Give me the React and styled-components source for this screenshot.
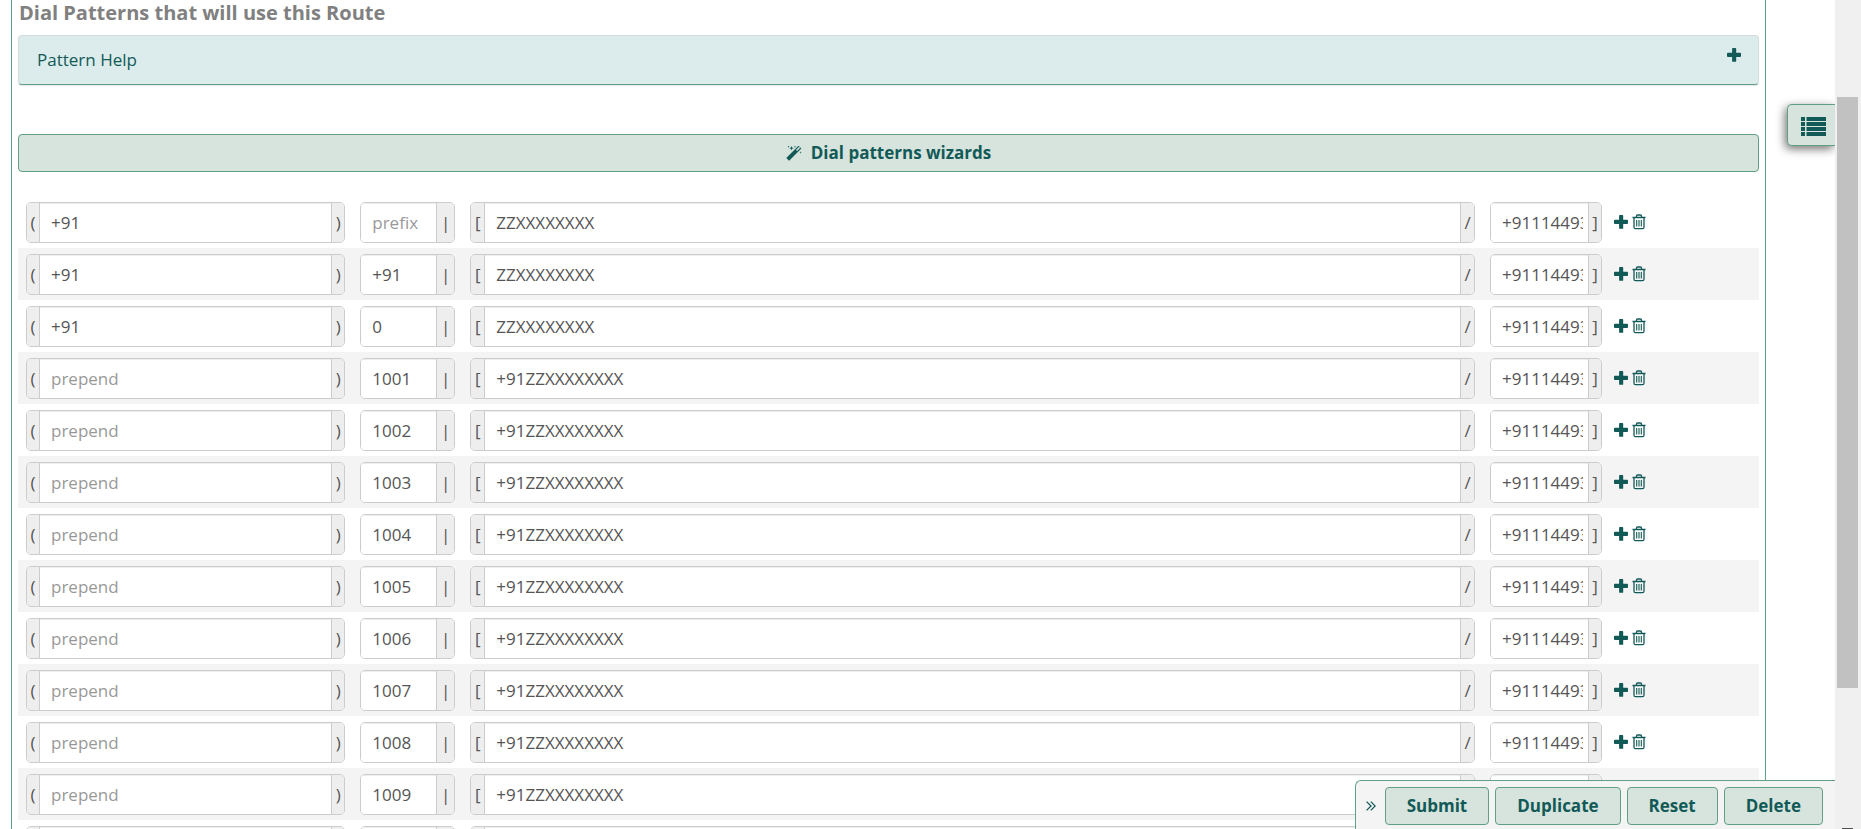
import React, { useState } from "react";
import styled, { createGlobalStyle } from "styled-components";

const GlobalStyle = createGlobalStyle`
  *, *::before, *::after { box-sizing: border-box; }
  body {
    margin: 0;
    background: #fff;
    color: #555;
    font-family: "Open Sans", "Noto Sans", sans-serif;
    font-size: 17px;
    line-height: 24px;
  }
  button, input { font: inherit; }
`;

const Shell = styled.div`
  display: flex;
  height: 100vh;
  overflow: hidden;
`;

const Page = styled.main`
  flex: 1;
  min-width: 0;
  padding: 0 69px 0 11px;
`;

const Panel = styled.section`
  padding: 0 6px;
  border: solid #62a085;
  border-width: 0 1px;
`;

const Title = styled.h3`
  margin: 0;
  padding-left: 1px;
  color: #808080;
  font-size: 20px;
  font-weight: 700;
  line-height: 26px;
`;

const HelpToggle = styled.button`
  display: flex;
  justify-content: space-between;
  width: 100%;
  height: 50px;
  margin-top: 9px;
  padding: 12px 17px 12px 18px;
  border: 1px solid #d5dddc;
  border-bottom-color: #62a085;
  border-radius: 4px;
  background: #dcecec;
  box-shadow: 0 1px 1px rgba(0, 0, 0, 0.1);
  color: #125a57;
  line-height: 24px;
  text-align: left;
  cursor: pointer;
`;

const Action = styled.button`
  display: flex;
  align-items: center;
  justify-content: center;
  gap: 9px;
  height: 38px;
  padding: 0 21px;
  border: 1px solid #62a085;
  border-radius: 4px;
  background: #d7e4dd;
  color: #125a57;
  font-weight: 700;
  cursor: pointer;
`;

const WizardButton = styled(Action)`
  width: 100%;
  margin: 49px 0 24px;
`;

const PatternTable = styled.table`
  width: 100%;
  border-collapse: collapse;
  table-layout: fixed;
`;

const Column = styled.col`
  width: ${(p) => p.$width};
`;

const Row = styled.tr`
  &:nth-child(even) { background: #f4f4f4; }
`;

const Cell = styled.td`
  padding: 6px 7px 5px 8px;
`;

const ActionCell = styled.td`
  padding: 0 5px;
`;

const Group = styled.div`
  display: flex;
  height: 41px;
  overflow: hidden;
  border: 1px solid #ccc;
  border-radius: 5px;
`;

const Addon = styled.span`
  display: flex;
  flex: none;
  align-items: center;
  justify-content: center;
  width: ${(p) => p.$width}px;
  border: solid #ccc;
  border-width: ${(p) => (p.$end ? "0 0 0 1px" : "0 1px 0 0")};
  background: #eee;
`;

const Field = styled.input`
  flex: 1;
  width: 0;
  min-width: 0;
  padding: 0 5px 0 11px;
  border: 0;
  outline: 0;
  background: #fff;
  box-shadow: inset 0 1px 1px rgba(0, 0, 0, 0.075);
  color: #555;

  &::placeholder { color: #999; opacity: 1; }
`;

const RowActions = styled.div`
  display: flex;
  align-items: center;
  gap: 4px;
`;

const IconButton = styled.button`
  display: flex;
  padding: 0;
  border: 0;
  background: none;
  color: #125a57;
  cursor: pointer;
`;

const SideTab = styled.button`
  position: fixed;
  top: 104px;
  right: 26px;
  display: flex;
  align-items: center;
  width: 48px;
  height: 42px;
  padding: 2px 0 0 13px;
  border: 1px solid #62a085;
  border-right: 0;
  border-radius: 5px 0 0 5px;
  background: #d7e4dd;
  box-shadow: -2px 3px 10px rgba(0, 0, 0, 0.55);
  clip-path: inset(-20px 0 -20px -20px);
  color: #125a57;
  cursor: pointer;
`;

const ActionBar = styled.div`
  position: fixed;
  right: 26px;
  bottom: 0;
  display: flex;
  gap: 6px;
  height: 49px;
  padding: 6px 12px 4px 8px;
  border: solid #62a085;
  border-width: 1px 0 0 1px;
  border-radius: 6px 0 0 0;
  background: #f4f4f4;
`;

const Collapse = styled(IconButton)`
  align-items: center;
  justify-content: center;
  width: 15px;
`;

const Track = styled.div`
  display: flex;
  flex: none;
  flex-direction: column;
  justify-content: space-between;
  width: 26px;
  padding: 97px 3px 0 2px;
  background: #f0f0f0;
`;

const Thumb = styled.div`
  height: 80.7%;
  background: #c1c1c1;
`;

const TrackEnd = styled.div`
  align-self: center;
  width: 11px;
  height: 1px;
  background: #505050;
`;

const PlusIcon = () => (
  <svg width="14" height="14" viewBox="0 0 14 14" fill="currentColor" aria-hidden="true">
    <path d="M6 0h2.400q.8 0 .8.8v4h4q.8 0 .8.8V8q0 .9-.8.9h-4v4q0 .9-.8.9H6q-.9 0-.9-.9v-4H.9Q0 8.900 0 8V5.600q0-.8.9-.8h4.200v-4Q5.100 0 6 0z" />
  </svg>
);

const TrashIcon = () => (
  <svg width="14" height="16" viewBox="0 0 14 16" fill="none" stroke="currentColor" strokeWidth="1.300" aria-hidden="true">
    <path d="M.5 3.500h13M4.500 3.200V2q0-1 1-1h3q1 0 1 1v1.200M2 3.500v9.700q0 1.500 1.500 1.500h7q1.500 0 1.500-1.500V3.500" />
    <path d="M4.700 6v6.500M7 6v6.500M9.300 6v6.500" strokeWidth="1.100" />
  </svg>
);

const WandIcon = () => (
  <svg width="16" height="16" viewBox="0 0 16 16" aria-hidden="true">
    <path d="M1.700 14.300 13.900 2.100" stroke="currentColor" strokeWidth="4" />
    <path d="m10.500 5.500 3.100-3.100" stroke="#d7e4dd" strokeWidth="1.500" />
    <path fill="currentColor" d="M2.500.5l.3.900.9.300-.9.300-.3.900-.3-.9-.9-.3.900-.3zM5.500 1l.6 1.600 1.600.6-1.600.6-.6 1.600-.6-1.600-1.600-.6 1.600-.6zM9 .5l.3.900.9.300-.9.300-.3.900-.3-.9-.9-.3.900-.3zM14.600 6.300l.3.900.9.300-.9.300-.3.900-.3-.9-.9-.3.900-.3z" />
  </svg>
);

const ListIcon = () => (
  <svg width="25" height="19" viewBox="0 0 25 19" fill="currentColor" aria-hidden="true">
    {[0, 5, 10, 15].map((y) => (
      <path key={y} d={`M0 ${y}h4v4H0zM5.500 ${y}H25v4H5.500z`} />
    ))}
  </svg>
);

const ChevronsIcon = () => (
  <svg width="10" height="10" viewBox="0 0 10 10" fill="none" stroke="currentColor" strokeWidth="1.300" aria-hidden="true">
    <path d="M.6.6 5 5 .6 9.400M4.800.6 9.200 5 4.800 9.400" />
  </svg>
);

const callerId = "+91114493";

const initialPatterns = [
  { prepend: "+91", prefix: "", match: "ZZXXXXXXXX", callerId },
  { prepend: "+91", prefix: "+91", match: "ZZXXXXXXXX", callerId },
  { prepend: "+91", prefix: "0", match: "ZZXXXXXXXX", callerId },
  ...Array.from({ length: 10 }, (_, i) => ({
    prepend: "",
    prefix: String(1001 + i),
    match: "+91ZZXXXXXXXX",
    callerId,
  })),
].map((pattern, id) => ({ ...pattern, id }));

function PatternRow({ pattern, onAdd, onRemove }) {
  return (
    <Row>
      <Cell>
        <Group>
          <Addon $width={13}>(</Addon>
          <Field aria-label="Prepend" placeholder="prepend" defaultValue={pattern.prepend} />
          <Addon $width={13} $end>)</Addon>
        </Group>
      </Cell>
      <Cell>
        <Group>
          <Field aria-label="Prefix" placeholder="prefix" defaultValue={pattern.prefix} />
          <Addon $width={18} $end>|</Addon>
        </Group>
      </Cell>
      <Cell>
        <Group>
          <Addon $width={14}>[</Addon>
          <Field aria-label="Match pattern" placeholder="match pattern" defaultValue={pattern.match} />
          <Addon $width={14} $end>/</Addon>
        </Group>
      </Cell>
      <Cell>
        <Group>
          <Field aria-label="Caller ID" placeholder="CallerID" defaultValue={pattern.callerId} />
          <Addon $width={13} $end>]</Addon>
        </Group>
      </Cell>
      <ActionCell>
        <RowActions>
          <IconButton type="button" aria-label="Add pattern" onClick={onAdd}><PlusIcon /></IconButton>
          <IconButton type="button" aria-label="Delete pattern" onClick={onRemove}><TrashIcon /></IconButton>
        </RowActions>
      </ActionCell>
    </Row>
  );
}

export default function App() {
  const [patterns, setPatterns] = useState(initialPatterns);

  const addAfter = (index) =>
    setPatterns((list) => [
      ...list.slice(0, index + 1),
      { id: Date.now(), prepend: "", prefix: "", match: "", callerId: "" },
      ...list.slice(index + 1),
    ]);
  const remove = (id) => setPatterns((list) => list.filter((p) => p.id !== id));

  return (
    <>
      <GlobalStyle />
      <Shell>
        <Page>
          <Panel>
            <Title>Dial Patterns that will use this Route</Title>
            <HelpToggle type="button">
              Pattern Help
              <PlusIcon />
            </HelpToggle>
            <WizardButton type="button">
              <WandIcon />
              Dial patterns wizards
            </WizardButton>
            <PatternTable>
              <colgroup>
                <Column $width="19.2%" />
                <Column $width="110px" />
                <Column $width="auto" />
                <Column $width="127px" />
                <Column $width="150px" />
              </colgroup>
              <tbody>
                {patterns.map((pattern, index) => (
                  <PatternRow
                    key={pattern.id}
                    pattern={pattern}
                    onAdd={() => addAfter(index)}
                    onRemove={() => remove(pattern.id)}
                  />
                ))}
              </tbody>
            </PatternTable>
          </Panel>
        </Page>
        <Track><Thumb /><TrackEnd /></Track>
      </Shell>
      <SideTab type="button" aria-label="Show list"><ListIcon /></SideTab>
      <ActionBar>
        <Collapse type="button" aria-label="Collapse"><ChevronsIcon /></Collapse>
        <Action type="submit">Submit</Action>
        <Action type="button">Duplicate</Action>
        <Action type="reset">Reset</Action>
        <Action type="button">Delete</Action>
      </ActionBar>
    </>
  );
}
